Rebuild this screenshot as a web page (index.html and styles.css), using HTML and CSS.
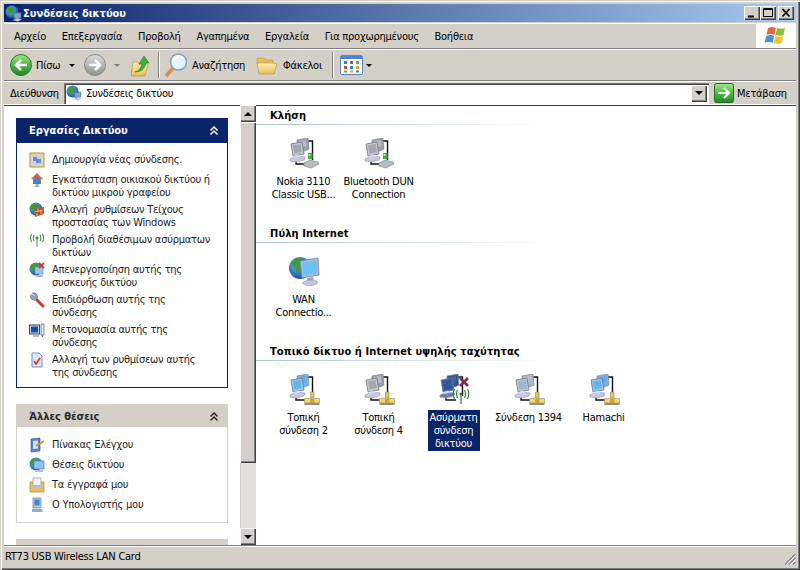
FILE: index.html
```html
<!DOCTYPE html>
<html lang="el">
<head>
<meta charset="utf-8">
<title>Συνδέσεις δικτύου</title>
<link rel="stylesheet" href="styles.css">
</head>
<body>
<svg class="defs" aria-hidden="true">
  <defs>
    <linearGradient id="gGreen" x1="0" y1="0" x2="0" y2="1"><stop offset="0" stop-color="#a5e58c"/><stop offset=".5" stop-color="#4fb645"/><stop offset="1" stop-color="#1f8a24"/></linearGradient>
    <linearGradient id="gGrey" x1="0" y1="0" x2="0" y2="1"><stop offset="0" stop-color="#dcdcdc"/><stop offset="1" stop-color="#8f8f8f"/></linearGradient>
    <linearGradient id="gFolder" x1="0" y1="0" x2="0" y2="1"><stop offset="0" stop-color="#fff0b0"/><stop offset="1" stop-color="#e8bd58"/></linearGradient>
    <radialGradient id="gGlobe" cx=".4" cy=".35" r=".7"><stop offset="0" stop-color="#6fb8f0"/><stop offset="1" stop-color="#12509e"/></radialGradient>
  </defs>
  <symbol id="net" viewBox="0 0 32 32">
    <path d="M20 3h4.500v19" fill="none" stroke="#111" stroke-width="1.400"/>
    <path d="M8 21v5h10" fill="none" stroke="#111" stroke-width="1.400"/>
    <path d="M9 2l11-2 1 11-4 2-8-2z" fill="var(--back)" stroke="#7f8a99" stroke-width=".7"/>
    <path d="M11 3l7-1 .6 6.500-7.600 1z" fill="var(--backhi)"/>
    <path d="M3 6l11-2 2 12-11 2z" fill="var(--front)" stroke="#6c7684" stroke-width=".8"/>
    <path d="M5 7.500l7.500-1.500 1.400 8-7.500 1.500z" fill="var(--fronthi)"/>
    <path d="M2 21l7-3 8 1-1 3-8 2-6-1z" fill="var(--base)" stroke="#8d8fb0" stroke-width=".6"/>
    <path d="M4 18.500l3 1.500 6-1.500-3-2z" fill="#d5d8ec"/>
  </symbol>
  <symbol id="tee" viewBox="0 0 32 32">
    <path d="M22.500 18h3.500v6h-3.500z" fill="#e6c650" stroke="#8c8a60" stroke-width=".6"/>
    <path d="M16.500 24.500h15v4.500h-15z" fill="#f2d86c" stroke="#9a9468" stroke-width=".6"/>
    <path d="M22 25h4.500v4H22z" fill="#c9a63a"/>
    <path d="M16.500 30h15" stroke="#6f7068" stroke-width="1.500"/>
  </symbol>
  <symbol id="modem" viewBox="0 0 32 32">
    <path d="M16 25l6-3 8 2 1 2-8 4-7-2z" fill="#b5bcc6" stroke="#7a808a" stroke-width=".6"/>
    <path d="M20 15h4.500v6H20z" fill="#4aa83c"/>
    <path d="M20.500 16h2v2h-2z" fill="#b7ec9d"/>
  </symbol>
  <symbol id="wifix" viewBox="0 0 32 32">
    <path d="M22 4l8 8m0-8l-8 8" stroke="#7d2e52" stroke-width="2.600"/>
    <circle cx="23" cy="20" r="1.500" fill="#2f7f2f"/>
    <path d="M23 21v9" stroke="#97a0ad" stroke-width="2"/>
    <path d="M19.500 16q-2 4 0 8M26.500 16q2 4 0 8M16.500 15q-2.500 5 0 10M29.500 15q2.500 5 0 10" fill="none" stroke="#2f8f2f" stroke-width="1.200"/>
  </symbol>
  <symbol id="wan" viewBox="0 0 32 32">
    <circle cx="12" cy="12" r="11" fill="url(#gGlobe)"/>
    <path d="M7 3c4-2 8-1 10 2 1 3-2 4-3 7s-3 6-5 4-1-5-4-6 0-5 2-7z" fill="#3f9a3c"/>
    <path d="M12 5l18-3 1 17-17 3z" fill="#a2bedd" stroke="#6a85a6" stroke-width=".8"/>
    <path d="M14 7l14-2.500 .8 12.500-13.500 2.500z" fill="#6cc0f5"/>
    <path d="M19 22l6-1 1 4h-7z" fill="#9ea7bb"/>
    <path d="M14 27q7-5 15-2 2 3-3 4-8 2-12-2z" fill="#c5c3dd" stroke="#8887a8" stroke-width=".5"/>
  </symbol>
  <symbol id="globe" viewBox="0 0 16 16">
    <circle cx="7" cy="7" r="6.500" fill="url(#gGlobe)"/>
    <path d="M3 2c3-1 6 0 7 2s-2 2-2 4-2 3-3 2-1-3-3-3 0-4 1-5z" fill="#3f9a3c"/>
  </symbol>
  <symbol id="netglobe" viewBox="0 0 16 16">
    <circle cx="6.500" cy="6.500" r="6" fill="url(#gGlobe)"/>
    <path d="M3 2c3-1 5 0 6 2s-2 2-2 3-2 3-3 2-1-3-2-3 0-3 1-4z" fill="#3f9a3c"/>
    <path d="M8 8l7-1v5l-6 1z" fill="#7fa4cc" stroke="#51688a" stroke-width=".5"/>
    <path d="M7 14l5-1.500 4 1-4 2z" fill="#c3c5de"/>
  </symbol>
</svg>

<div class="window">
  <header class="titlebar">
    <svg class="titleicon"><use href="#netglobe"/></svg>
    <span class="titletext">Συνδέσεις δικτύου</span>
    <div class="winbtns">
      <span class="winbtn"><svg viewBox="0 0 14 12"><path d="M3 8.500h6v2H3z" fill="#000"/></svg></span>
      <span class="winbtn"><svg viewBox="0 0 14 12"><path d="M2.500 1.500h9v8h-9zM2.500 2.500h9" fill="none" stroke="#000"/></svg></span>
      <span class="winbtn close"><svg viewBox="0 0 14 12"><path d="M3.500 2l7 7.500m0-7.500l-7 7.500" stroke="#000" stroke-width="1.700"/></svg></span>
    </div>
  </header>

  <nav class="menubar">
    <ul class="menu">
      <li>Αρχείο</li><li>Επεξεργασία</li><li>Προβολή</li><li>Αγαπημένα</li><li>Εργαλεία</li><li>Για προχωρημένους</li><li>Βοήθεια</li>
    </ul>
    <div class="logo">
      <svg viewBox="0 0 22 20" width="22" height="20">
        <path d="M3 2q4-2 8 0l-1.500 7q-4-2-8 0z" fill="#e8673a"/>
        <path d="M12 2q4 1.500 8 0l-1.500 7q-4 1.500-8 0z" fill="#8dbb3c"/>
        <path d="M1.200 10q4-2 8 0l-1.500 7q-4-2-8 0z" fill="#4a90d8"/>
        <path d="M10.300 10q4 1.500 8 0l-1.500 7q-4 1.500-8 0z" fill="#f2c230"/>
      </svg>
    </div>
  </nav>

  <div class="toolbar">
    <svg class="round" viewBox="0 0 22 22"><circle cx="11" cy="11" r="10.500" fill="url(#gGreen)" stroke="#2b7a2b"/><path d="M17 11H7m4-5l-5 5 5 5" fill="none" stroke="#fff" stroke-width="2.600"/></svg>
    <span class="tlabel back">Πίσω</span>
    <span class="caret dd1"></span>
    <svg class="round fwd" viewBox="0 0 22 22"><circle cx="11" cy="11" r="10.500" fill="url(#gGrey)" stroke="#8a8a8a"/><path d="M5 11h10m-4-5l5 5-5 5" fill="none" stroke="#fff" stroke-width="2.600"/></svg>
    <span class="caret dd2 dim"></span>
    <svg class="tool up" viewBox="0 0 20 24"><path d="M3 9h5l1 2h9l-3 12H1z" fill="url(#gFolder)" stroke="#b99a45" stroke-width=".7"/><path d="M5 19q5-1 7-8h-3l5-8 5 7h-3q-2 9-11 9z" fill="#3fae3c" stroke="#1f7d1f" stroke-width=".6"/></svg>
    <span class="tsep"></span>
    <svg class="tool search" viewBox="0 0 24 24"><path d="M2 23l8-9" stroke="#d68b4a" stroke-width="3.500"/><circle cx="14.500" cy="9" r="8" fill="#e3f2fb" stroke="#7fa2c4" stroke-width="1.500"/><path d="M10 8a5 5 0 0 1 5-4" fill="none" stroke="#fff" stroke-width="2"/></svg>
    <span class="tlabel slabel">Αναζήτηση</span>
    <svg class="tool folders" viewBox="0 0 22 20"><path d="M1 3h7l2 2h7v4H1z" fill="#e2bd62" stroke="#b99a45" stroke-width=".6"/><path d="M1 8h16l4 1-3 10H3z" fill="url(#gFolder)" stroke="#b99a45" stroke-width=".7"/></svg>
    <span class="tlabel flabel">Φάκελοι</span>
    <span class="tsep sep2"></span>
    <svg class="tool views" viewBox="0 0 23 20"><rect x=".5" y=".5" width="22" height="19" rx="1.500" fill="#fff" stroke="#5d86c4"/><path d="M1 1h21v3H1z" fill="#4c84d8"/><path d="M4 6h3v3H4z" fill="#3a78c8"/><path d="M10 6h3v3h-3z" fill="#c0504d"/><path d="M16 6h3v3h-3z" fill="#6aa84f"/><path d="M4 11h3v3H4z" fill="#c0504d"/><path d="M10 11h3v3h-3z" fill="#3a78c8"/><path d="M16 11h3v3h-3z" fill="#e0a030"/><path d="M4 15.500h3v2H4z" fill="#6aa84f"/><path d="M10 15.500h3v2h-3z" fill="#e0a030"/><path d="M16 15.500h3v2h-3z" fill="#3a78c8"/></svg>
    <span class="caret dd3"></span>
  </div>

  <div class="addressbar">
    <span class="addrlabel">Διεύθυνση</span>
    <div class="addrbox">
      <svg class="ico16"><use href="#netglobe"/></svg>
      <span class="addrtext">Συνδέσεις δικτύου</span>
      <span class="combo"><span class="tri-down"></span></span>
    </div>
    <svg class="go" viewBox="0 0 20 20"><rect x=".5" y=".5" width="19" height="19" rx="2" fill="url(#gGreen)" stroke="#1e6f1e"/><path d="M4 10h11m-5-5l5 5-5 5" fill="none" stroke="#fff" stroke-width="2.200"/></svg>
    <span class="golabel">Μετάβαση</span>
  </div>

  <main class="content">
    <aside class="sidebar">
      <section class="task primary">
        <h2 class="taskhead">Εργασίες Δικτύου<svg class="chev" viewBox="0 0 10 10"><path d="M1.500 4.500L5 1l3.500 3.500M1.500 8.500L5 5l3.500 3.500" fill="none" stroke="currentColor" stroke-width="1.500"/></svg></h2>
        <ul class="tasklist">
          <li><svg class="ico16" viewBox="0 0 16 16"><rect x="1" y="1" width="14" height="14" fill="#e8d9a0" stroke="#a8944e"/><rect x="3" y="3" width="10" height="10" fill="#c6d4ea"/><path d="M4 5h4v4H4zM7 7h5v4H7z" fill="#6a8fc8"/></svg><span>Δημιουργία νέας σύνδεσης.</span></li>
          <li><svg class="ico16" viewBox="0 0 16 16"><path d="M8 1L2 7h2v5h8V7h2z" fill="#d9603b"/><circle cx="8" cy="9" r="3.500" fill="#3f86c8"/><path d="M5 15l3-3 3 3z" fill="#9aa8bd"/></svg><span>Εγκατάσταση οικιακού δικτύου ή<br>δικτύου μικρού γραφείου</span></li>
          <li><svg class="ico16" viewBox="0 0 16 16"><use href="#globe"/><path d="M5 7l10-2v7l-9 3z" fill="#b9522f"/><path d="M5.500 10l9-2M9 6.500v3M12 9v3M8 11v3" stroke="#eec9a8" stroke-width=".8" fill="none"/></svg><span>Αλλαγή  ρυθμίσεων Τείχους<br>προστασίας των Windows</span></li>
          <li><svg class="ico16" viewBox="0 0 16 16"><circle cx="8" cy="6" r="1.500" fill="#3f8f3a"/><path d="M8 7v8" stroke="#9aa5b3" stroke-width="1.600"/><path d="M5 3q-1.500 3 0 6M11 3q1.500 3 0 6M2.500 2q-2 4 0 8M13.500 2q2 4 0 8" fill="none" stroke="#2f9a2f" stroke-width="1.100"/></svg><span>Προβολή διαθέσιμων ασύρματων<br>δικτύων</span></li>
          <li><svg class="ico16" viewBox="0 0 16 16"><use href="#globe"/><rect x="6" y="5" width="8" height="7" fill="#9fc3ea" stroke="#6c88aa" stroke-width=".6"/><path d="M7 13h7v2H7z" fill="#b5b9cc"/><path d="M10 1l5 5m0-5l-5 5" stroke="#d13a2a" stroke-width="1.800"/></svg><span>Απενεργοποίηση αυτής της<br>συσκευής δικτύου</span></li>
          <li><svg class="ico16" viewBox="0 0 16 16"><path d="M7 7l8 8" stroke="#cf3b32" stroke-width="3"/><path d="M2 1.500l3 3 1-1-2.500-2.500a4 4 0 0 1 5 5l-2 2a4 4 0 0 1-5-5l2.500 2.500" fill="#9aa3ae" stroke="#6f7884" stroke-width=".8"/></svg><span>Επιδιόρθωση αυτής της<br>σύνδεσης</span></li>
          <li><svg class="ico16" viewBox="0 0 16 16"><rect x="0.500" y="3" width="10" height="9" fill="#ccd6e4" stroke="#3b4b66"/><rect x="2" y="4.500" width="7" height="6" fill="#1a4fa8"/><path d="M12 2h3v11h-3z" fill="#dfe4ec" stroke="#6d7a8c" stroke-width=".8"/><path d="M13.500 13v2M4 14h6" stroke="#6d7a8c" stroke-width="1.200"/></svg><span>Μετονομασία αυτής της<br>σύνδεσης</span></li>
          <li><svg class="ico16" viewBox="0 0 16 16"><path d="M3 1h7l3 3v11H3z" fill="#dbe7f7" stroke="#6f8fc0"/><path d="M5 9l2 3 4-6" fill="none" stroke="#d8322a" stroke-width="1.700"/></svg><span>Αλλαγή των ρυθμίσεων αυτής<br>της σύνδεσης</span></li>
        </ul>
      </section>

      <section class="task">
        <h2 class="taskhead">Άλλες θέσεις<svg class="chev" viewBox="0 0 10 10"><path d="M1.500 4.500L5 1l3.500 3.500M1.500 8.500L5 5l3.500 3.500" fill="none" stroke="currentColor" stroke-width="1.500"/></svg></h2>
        <ul class="tasklist">
          <li><svg class="ico16" viewBox="0 0 16 16"><path d="M2 2l9-1v13l-9 1z" fill="#5b84c4" stroke="#2f4f88" stroke-width=".6"/><path d="M4 4l5-.5v8l-5 .5z" fill="#cfe0f5"/><path d="M7 9l8-5" stroke="#d98a3c" stroke-width="1.600"/></svg><span>Πίνακας Ελέγχου</span></li>
          <li><svg class="ico16" viewBox="0 0 16 16"><use href="#globe"/><rect x="5" y="4" width="10" height="8" fill="#8fc2f0" stroke="#5d7ea5" stroke-width=".7"/><path d="M6 13h8v2H6z" fill="#b9bad3"/></svg><span>Θέσεις δικτύου</span></li>
          <li><svg class="ico16" viewBox="0 0 16 16"><path d="M1 5h14v10H1z" fill="#e9bf60" stroke="#a98a3c" stroke-width=".7"/><path d="M4 1h8v9H4z" fill="#f4f6fa" stroke="#8a94a8" stroke-width=".7"/><path d="M3 8h10v3H3z" fill="#a9c2e4"/></svg><span>Τα έγγραφά μου</span></li>
          <li><svg class="ico16" viewBox="0 0 16 16"><path d="M4 1h8v10H4z" fill="#b8c8dd" stroke="#6d7f99" stroke-width=".7"/><path d="M5.500 2.500h5v6h-5z" fill="#3f86dd"/><path d="M3 12h10l1 3H3z" fill="#9ea8c8"/></svg><span>Ο Υπολογιστής μου</span></li>
        </ul>
      </section>

      <section class="task">
        <div class="taskhead"></div>
      </section>
    </aside>

    <div class="vscroll">
      <span class="sbtn"><span class="tri-up"></span></span>
      <span class="thumb"></span>
      <span class="strack"></span>
      <span class="sbtn"><span class="tri-down"></span></span>
    </div>

    <div class="pane">
      <section class="group">
        <h3 class="grouphead">Κλήση</h3>
        <div class="items">
          <figure class="item dim"><svg class="ico32"><use href="#net"/><use href="#modem"/></svg><figcaption>Nokia 3110<br>Classic USB...</figcaption></figure>
          <figure class="item dim"><svg class="ico32"><use href="#net"/><use href="#modem"/></svg><figcaption>Bluetooth DUN<br>Connection</figcaption></figure>
        </div>
      </section>
      <section class="group">
        <h3 class="grouphead">Πύλη Internet</h3>
        <div class="items">
          <figure class="item"><svg class="ico32"><use href="#wan"/></svg><figcaption>WAN<br>Connectio...</figcaption></figure>
        </div>
      </section>
      <section class="group">
        <h3 class="grouphead">Τοπικό δίκτυο ή Internet υψηλής ταχύτητας</h3>
        <div class="items">
          <figure class="item on"><svg class="ico32"><use href="#net"/><use href="#tee"/></svg><figcaption>Τοπική<br>σύνδεση 2</figcaption></figure>
          <figure class="item dim"><svg class="ico32"><use href="#net"/><use href="#tee"/></svg><figcaption>Τοπική<br>σύνδεση 4</figcaption></figure>
          <figure class="item sel"><svg class="ico32"><use href="#net"/><use href="#wifix"/></svg><figcaption>Ασύρματη<br>σύνδεση<br>δικτύου</figcaption></figure>
          <figure class="item mid"><svg class="ico32"><use href="#net"/><use href="#tee"/></svg><figcaption>Σύνδεση 1394</figcaption></figure>
          <figure class="item on"><svg class="ico32"><use href="#net"/><use href="#tee"/></svg><figcaption>Hamachi</figcaption></figure>
        </div>
      </section>
    </div>
  </main>

  <footer class="statusbar">
    <span>RT73 USB Wireless LAN Card</span>
    <svg class="grip" viewBox="0 0 12 12"><path d="M11.500 1L1 11.500M11.500 5L5 11.500M11.500 9L9 11.500" stroke="#808080" stroke-width="1.200"/><path d="M11.500 2.500L2.500 11.500M11.500 6.500L6.500 11.500" stroke="#fff"/></svg>
  </footer>
</div>
</body>
</html>
```
FILE: styles.css
```css
* { box-sizing: border-box; }
html, body { margin: 0; padding: 0; }
body {
  width: 800px;
  height: 570px;
  overflow: hidden;
  font-family: "DejaVu Sans Condensed", "DejaVu Sans", sans-serif;
  font-size: 11px;
  letter-spacing: -0.25px;
  color: #000;
}
ul { list-style: none; margin: 0; padding: 0; }
figure, h2, h3 { margin: 0; }
.defs { width: 0; height: 0; position: absolute; }
.ico16 { width: 16px; height: 16px; flex: none; }
.ico32 { width: 32px; height: 32px; display: block; margin: 0 auto; }

.window {
  width: 800px;
  height: 570px;
  background: #d4d0c8;
  padding: 4px 4px 4px;
  display: flex;
  flex-direction: column;
  box-shadow: inset 1px 1px 0 #d4d0c8, inset 2px 2px 0 #fff, inset -1px -1px 0 #404040, inset -2px -2px 0 #808080;
}

.titlebar {
  height: 18px;
  flex: none;
  background: linear-gradient(90deg, #0a246a, #a6caf0);
  display: flex;
  align-items: center;
  padding: 0 2px 0 1px;
  color: #fff;
  font-weight: bold;
  letter-spacing: 0;
}
.titleicon { width: 17px; height: 17px; flex: none; margin-right: 1px; }
.winbtns { margin-left: auto; display: flex; }
.winbtn {
  width: 16px;
  height: 14px;
  background: #d4d0c8;
  box-shadow: inset 1px 1px 0 #fff, inset -1px -1px 0 #404040, inset -2px -2px 0 #808080;
  display: block;
}
.winbtn svg { width: 14px; height: 12px; display: block; margin: 1px; }
.winbtn.close { margin-left: 2px; }

.menubar {
  height: 26px;
  flex: none;
  margin-top: 1px;
  display: flex;
  border-top: 1px solid #fff;
  border-bottom: 1px solid #808080;
}
.menu { display: flex; align-items: center; gap: 15.8px; padding-left: 10px; flex: 1; }
.logo {
  width: 40px;
  background: #fff;
  display: flex;
  align-items: center;
  justify-content: center;
}

.toolbar {
  height: 32px;
  flex: none;
  display: flex;
  align-items: center;
  padding-left: 6px;
  border-top: 1px solid #fff;
  border-bottom: 1px solid #808080;
}
.round { width: 22px; height: 22px; flex: none; }
.tool { flex: none; }
.tlabel { flex: none; }
.back { margin-left: 4px; width: 25px; }
.caret {
  width: 0; height: 0; flex: none;
  border-left: 3px solid transparent;
  border-right: 3px solid transparent;
  border-top: 3px solid #000;
}
.caret.dim { border-top-color: #808080; }
.dd1 { margin-left: 8px; }
.fwd { margin-left: 9px; }
.dd2 { margin-left: 8px; }
.up { width: 20px; height: 24px; margin-left: 10px; }
.tsep { width: 2px; height: 26px; margin-left: 8px; border-left: 1px solid #808080; border-right: 1px solid #fff; }
.search { width: 24px; height: 24px; margin-left: 4px; }
.slabel { margin-left: 4px; width: 52px; }
.folders { width: 22px; height: 20px; margin-left: 12px; }
.flabel { margin-left: 5px; width: 40px; }
.sep2 { margin-left: 9px; }
.views { width: 23px; height: 20px; margin-left: 6px; }
.dd3 { margin-left: 3px; }

.addressbar {
  height: 24px;
  flex: none;
  display: flex;
  align-items: center;
  padding-left: 6px;
  border-top: 1px solid #fff;
  border-bottom: 1px solid #fff;
}
.addrlabel { width: 54px; flex: none; }
.addrbox {
  width: 645px;
  height: 21px;
  flex: none;
  background: #fff;
  display: flex;
  align-items: center;
  padding-left: 2px;
  box-shadow: inset 1px 1px 0 #808080, inset 2px 2px 0 #404040, inset -1px -1px 0 #fff;
}
.addrtext { margin-left: 4px; flex: 1; }
.combo {
  width: 16px;
  height: 17px;
  margin-right: 2px;
  background: #d4d0c8;
  box-shadow: inset 1px 1px 0 #fff, inset -1px -1px 0 #404040, inset -2px -2px 0 #808080;
  display: flex;
  align-items: center;
  justify-content: center;
}
.tri-down, .tri-up {
  width: 0; height: 0; display: block;
  border-left: 4px solid transparent;
  border-right: 4px solid transparent;
}
.tri-down { border-top: 4px solid #000; }
.tri-up { border-bottom: 4px solid #000; }
.go { width: 20px; height: 20px; margin-left: 5px; flex: none; }
.golabel { margin-left: 3px; flex: none; }

.content {
  flex: 1;
  min-height: 0;
  display: flex;
  background: #fff;
  box-shadow: inset 0 1px 0 #404040;
}
.sidebar {
  width: 236px;
  flex: none;
  padding: 13px 12px 0;
  overflow: hidden;
  display: flex;
  flex-direction: column;
  gap: 16px;
}
.task { flex: none; }
.taskhead {
  height: 23px;
  background: #d4d0c8;
  color: #2a2a2a;
  font-size: 11px;
  font-weight: bold;
  letter-spacing: 0;
  padding: 2px 8px 0 13px;
  display: flex;
  align-items: center;
  justify-content: space-between;
}
.primary .taskhead { height: 25px; padding-top: 0; background: #0a246a; color: #fff; }
.chev { width: 10px; height: 10px; margin-right: 1px; }
.tasklist {
  padding: 10px 4px 9px 12px;
  border: 1px solid #d4d0c8;
  border-top: 0;
  display: flex;
  flex-direction: column;
  gap: 4px;
}
.primary .tasklist { border-color: #0a246a; padding: 9px 4px 9px 12px; }
.tasklist li { display: flex; gap: 7px; line-height: 13px; min-height: 16px; align-items: flex-start; white-space: pre; }
.tasklist li span { margin-top: 1px; margin-bottom: -1px; color: #1c1c1c; }

.vscroll {
  width: 16px;
  flex: none;
  display: flex;
  flex-direction: column;
  background: #e4e1da;
  box-shadow: inset 1px 0 0 #d4d0c8;
}
.sbtn, .thumb {
  flex: none;
  background: #d4d0c8;
  box-shadow: inset 1px 1px 0 #fff, inset -1px -1px 0 #404040, inset -2px -2px 0 #808080;
}
.sbtn { height: 17px; display: flex; align-items: center; justify-content: center; }
.thumb { height: 341px; }
.strack { flex: 1; }

.pane { flex: 1; min-width: 0; overflow: hidden; }
.group { height: 118px; }
.grouphead {
  height: 20px;
  font-size: 11px;
  font-weight: bold;
  letter-spacing: 0.1px;
  padding: 4px 0 0 14px;
  line-height: 14px;
  border-bottom: 1px solid transparent;
  border-image: linear-gradient(90deg, #a6c4dc, #ffffff 55%) 1;
}
.items { display: flex; padding: 13px 0 0 10px; }
.item { width: 75px; flex: none; text-align: center; }
figcaption { margin: 5px auto 0; line-height: 13px; white-space: nowrap; }
.item { --back: #9a9ea6; --backhi: #b8bcc2; --front: #c4c7cc; --fronthi: #a4a8ae; --base: #c9cbdd; }
.item.on { --back: #7ab0e8; --backhi: #5cb2f0; --front: #9cc4ee; --fronthi: #62b7f2; --base: #c8c8e4; }
.item.mid { --back: #a6b4c4; --backhi: #b7c0cc; --front: #bac4d2; --fronthi: #a4b4ca; --base: #c8c8e4; }
.item.sel { --back: #2f4f8f; --backhi: #3b62aa; --front: #3a5ca0; --fronthi: #2d57a4; --base: #6a7cb0; }
.item.sel figcaption {
  width: 52px;
  padding-top: 1px;
  height: 41px;
  margin-top: 4px;
  background: #0a246a;
  color: #fff;
}

.statusbar {
  height: 21px;
  flex: none;
  display: flex;
  align-items: center;
  padding-left: 1px;
  position: relative;
  border-top: 1px solid #808080;
  box-shadow: inset 0 1px 0 #fff;
}
.grip { width: 12px; height: 12px; margin-left: auto; align-self: flex-end; margin-bottom: 1px; }
```
